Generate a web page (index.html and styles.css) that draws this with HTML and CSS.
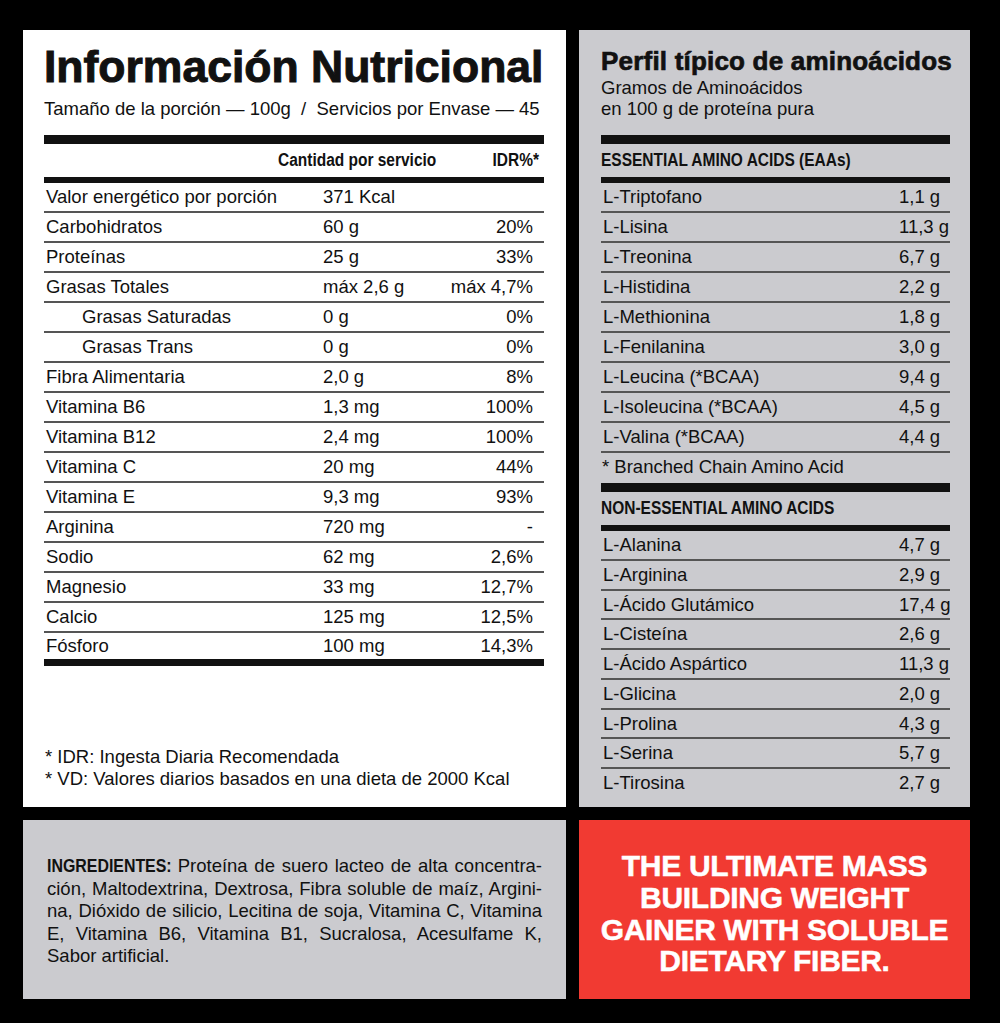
FILE: index.html
```html
<!DOCTYPE html>
<html lang="es">
<head>
<meta charset="utf-8">
<title>Información Nutricional</title>
<link rel="stylesheet" href="styles.css">
</head>
<body>
<main class="sheet">
  <section class="panel nutrition">
    <header class="head">
      <h1 class="title">Información Nutricional</h1>
      <p class="serving">Tamaño de la porción — 100g&nbsp; /&nbsp; Servicios por Envase — 45</p>
    </header>
    <div class="bar-thick"></div>
    <div class="col-head"><span></span><span class="cond">Cantidad por servicio</span><span class="cond cond-right">IDR%*</span></div>
    <div class="bar"></div>
    <div class="rows">
      <div class="row"><span>Valor energético por porción</span><span>371 Kcal</span><span class="pct"></span></div>
      <div class="row"><span>Carbohidratos</span><span>60 g</span><span class="pct">20%</span></div>
      <div class="row"><span>Proteínas</span><span>25 g</span><span class="pct">33%</span></div>
      <div class="row"><span>Grasas Totales</span><span>máx 2,6 g</span><span class="pct">máx 4,7%</span></div>
      <div class="row indent"><span>Grasas Saturadas</span><span>0 g</span><span class="pct">0%</span></div>
      <div class="row indent"><span>Grasas Trans</span><span>0 g</span><span class="pct">0%</span></div>
      <div class="row"><span>Fibra Alimentaria</span><span>2,0 g</span><span class="pct">8%</span></div>
      <div class="row"><span>Vitamina B6</span><span>1,3 mg</span><span class="pct">100%</span></div>
      <div class="row"><span>Vitamina B12</span><span>2,4 mg</span><span class="pct">100%</span></div>
      <div class="row"><span>Vitamina C</span><span>20 mg</span><span class="pct">44%</span></div>
      <div class="row"><span>Vitamina E</span><span>9,3 mg</span><span class="pct">93%</span></div>
      <div class="row"><span>Arginina</span><span>720 mg</span><span class="pct">-</span></div>
      <div class="row"><span>Sodio</span><span>62 mg</span><span class="pct">2,6%</span></div>
      <div class="row"><span>Magnesio</span><span>33 mg</span><span class="pct">12,7%</span></div>
      <div class="row"><span>Calcio</span><span>125 mg</span><span class="pct">12,5%</span></div>
      <div class="row"><span>Fósforo</span><span>100 mg</span><span class="pct">14,3%</span></div>
    </div>
    <div class="bar bar-bottom"></div>
    <div class="notes">
      <p>* IDR: Ingesta Diaria Recomendada</p>
      <p>* VD: Valores diarios basados en una dieta de 2000 Kcal</p>
    </div>
  </section>

  <section class="panel amino">
    <header class="head">
      <h2 class="amino-title">Perfil típico de aminoácidos</h2>
      <p class="amino-sub">Gramos de Aminoácidos<br>en 100 g de proteína pura</p>
    </header>
    <div class="bar-thick"></div>
    <div class="sec-head"><span class="cond">ESSENTIAL AMINO ACIDS (EAAs)</span></div>
    <div class="bar"></div>
    <div class="arows">
      <div class="arow"><span>L-Triptofano</span><span>1,1 g</span></div>
      <div class="arow"><span>L-Lisina</span><span>11,3 g</span></div>
      <div class="arow"><span>L-Treonina</span><span>6,7 g</span></div>
      <div class="arow"><span>L-Histidina</span><span>2,2 g</span></div>
      <div class="arow"><span>L-Methionina</span><span>1,8 g</span></div>
      <div class="arow"><span>L-Fenilanina</span><span>3,0 g</span></div>
      <div class="arow"><span>L-Leucina (*BCAA)</span><span>9,4 g</span></div>
      <div class="arow"><span>L-Isoleucina (*BCAA)</span><span>4,5 g</span></div>
      <div class="arow"><span>L-Valina (*BCAA)</span><span>4,4 g</span></div>
      <div class="afoot">* Branched Chain Amino Acid</div>
    </div>
    <div class="bar-thick"></div>
    <div class="sec-head"><span class="cond">NON-ESSENTIAL AMINO ACIDS</span></div>
    <div class="bar"></div>
    <div class="arows tight">
      <div class="arow"><span>L-Alanina</span><span>4,7 g</span></div>
      <div class="arow"><span>L-Arginina</span><span>2,9 g</span></div>
      <div class="arow"><span>L-Ácido Glutámico</span><span>17,4 g</span></div>
      <div class="arow"><span>L-Cisteína</span><span>2,6 g</span></div>
      <div class="arow"><span>L-Ácido Aspártico</span><span>11,3 g</span></div>
      <div class="arow"><span>L-Glicina</span><span>2,0 g</span></div>
      <div class="arow"><span>L-Prolina</span><span>4,3 g</span></div>
      <div class="arow"><span>L-Serina</span><span>5,7 g</span></div>
      <div class="arow last"><span>L-Tirosina</span><span>2,7 g</span></div>
    </div>
  </section>

  <section class="panel ingredients">
    <p class="ing">
      <span class="ing-line"><b class="ing-label"><span class="cond">INGREDIENTES:</span></b> Proteína de suero lacteo de alta concentra-</span>
      <span class="ing-line">ción, Maltodextrina, Dextrosa, Fibra soluble de maíz, Argini-</span>
      <span class="ing-line">na, Dióxido de silicio, Lecitina de soja, Vitamina C, Vitamina</span>
      <span class="ing-line">E, Vitamina B6, Vitamina B1, Sucralosa, Acesulfame K,</span>
      <span class="ing-line end">Sabor artificial.</span>
    </p>
  </section>

  <section class="panel slogan">
    <p class="slogan-text">THE ULTIMATE MASS<br>BUILDING WEIGHT<br>GAINER WITH SOLUBLE<br>DIETARY FIBER.</p>
  </section>
</main>
</body>
</html>
```

FILE: styles.css
```css
* { box-sizing: border-box; }

html, body {
  margin: 0;
  background: #000;
}

body {
  width: 1000px;
  height: 1023px;
  overflow: hidden;
  font-family: "Liberation Sans", Arial, sans-serif;
  color: #111;
}

.sheet {
  display: grid;
  grid-template-columns: 543px 391px;
  grid-template-rows: 777px 179px;
  column-gap: 13px;
  row-gap: 13px;
  padding: 30px 0 0 23px;
}

.panel {
  display: flex;
  flex-direction: column;
}

p { margin: 0; }

/* condensed bold labels: Liberation Sans Bold narrowed */
.cond {
  display: inline-block;
  font-weight: 700;
  white-space: nowrap;
  transform: scaleX(0.86);
  transform-origin: left center;
}

.cond-right {
  transform-origin: right center;
}

/* ---------- Nutrition panel ---------- */
.nutrition {
  background: #fff;
  padding: 0 22px 17px 21px;
}

.head {
  height: 105px;
}

.title {
  margin: 0;
  padding-top: 11px;
  font-size: 44.5px;
  line-height: 52px;
  font-weight: 700;
  letter-spacing: 0;
  -webkit-text-stroke: 1px #111;
  white-space: nowrap;
}

.serving {
  margin-top: 5px;
  font-size: 18.5px;
  line-height: 22px;
  white-space: nowrap;
}

.bar-thick {
  height: 9px;
  background: #111;
}

.bar {
  height: 6px;
  background: #111;
}

.bar-bottom {
  height: 7px;
}

.col-head {
  height: 33px;
  display: grid;
  grid-template-columns: 234px 1fr auto;
  align-items: center;
  padding-right: 5px;
  font-size: 18px;
}

.row {
  display: grid;
  grid-template-columns: 277px 1fr auto;
  height: 30px;
  line-height: 28px;
  padding: 0 11px 0 2px;
  border-bottom: 2px solid #555;
  font-size: 18.5px;
  white-space: nowrap;
}

.row:last-child {
  height: 26px;
  line-height: 26px;
  border-bottom: 0;
}

.indent span:first-child {
  padding-left: 36px;
}

.pct {
  text-align: right;
}

.notes {
  margin-top: auto;
  padding-left: 1px;
  font-size: 18.5px;
  line-height: 22px;
}

/* ---------- Amino panel ---------- */
.amino {
  background: #cbcbcf;
  padding: 0 20px 0 22px;
}

.amino-title {
  margin: 0;
  padding-top: 16px;
  font-size: 26px;
  line-height: 30px;
  font-weight: 700;
  letter-spacing: 0.2px;
  -webkit-text-stroke: 0.7px #111;
  white-space: nowrap;
}

.amino-sub {
  margin-top: 1px;
  font-size: 18.5px;
  line-height: 21px;
}

.sec-head {
  height: 33px;
  line-height: 33px;
  font-size: 18px;
}

.arow {
  display: grid;
  grid-template-columns: 296px 1fr;
  height: 30px;
  line-height: 28px;
  padding-left: 2px;
  border-bottom: 2px solid #555;
  font-size: 18.5px;
  white-space: nowrap;
}

.tight .arow {
  height: 29.75px;
  line-height: 27px;
}

.arow.last {
  border-bottom: 0;
}

.afoot {
  height: 30px;
  line-height: 28px;
  padding-left: 1px;
  font-size: 18.5px;
}

/* ---------- Ingredients ---------- */
.ingredients {
  background: #cbcbcf;
  justify-content: center;
  padding: 4px 24px 0 24px;
}

.ing {
  font-size: 18.5px;
  line-height: 22.5px;
}

.ing-line {
  display: block;
  text-align: justify;
  text-align-last: justify;
}

.ing-line.end {
  text-align-last: left;
}

.ing-label {
  display: inline-block;
  width: 124px;
  font-weight: 700;
}

/* ---------- Slogan ---------- */
.slogan {
  background: #f13a32;
  color: #fff;
  align-items: center;
  justify-content: center;
  padding-top: 8px;
}

.slogan-text {
  text-align: center;
  font-weight: 700;
  font-size: 30px;
  line-height: 31.7px;
  letter-spacing: -0.3px;
  -webkit-text-stroke: 0.5px #fff;
  white-space: nowrap;
}
```
